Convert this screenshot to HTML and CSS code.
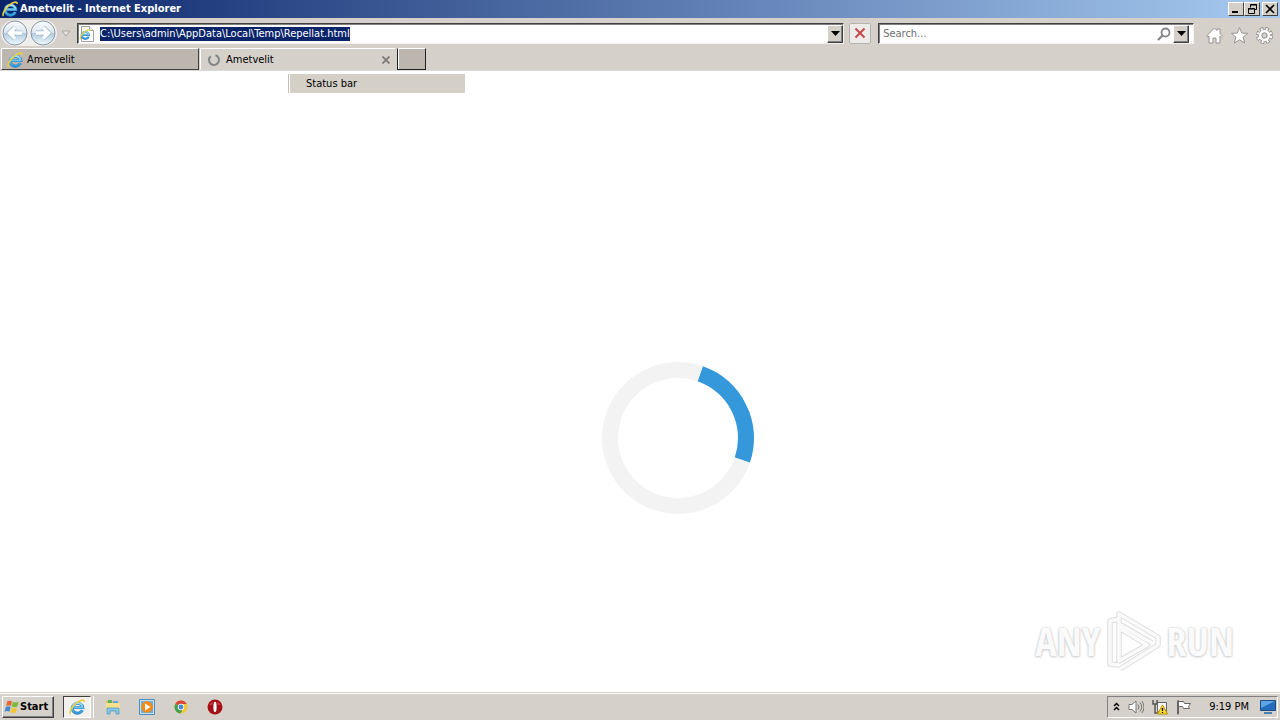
FILE: index.html
```html
<!DOCTYPE html>
<html lang="en">
<head>
<meta charset="utf-8">
<title>Ametvelit - Internet Explorer</title>
<link rel="stylesheet" href="styles.css">
</head>
<body>
<svg class="defs" aria-hidden="true">
  <defs>
    <linearGradient id="blue" x2="0" y2="1"><stop stop-color="#a5e4fb"/><stop offset="1" stop-color="#2b98dd"/></linearGradient>
    <linearGradient id="orb" x2="0" y2="1"><stop stop-color="#fbfcfd"/><stop offset=".48" stop-color="#dde6f0"/><stop offset=".52" stop-color="#b3cbe0"/><stop offset="1" stop-color="#effbff"/></linearGradient>
    <symbol id="ie" viewBox="0 0 16 16">
      <path d="M13.400 11.200A5.300 5 0 1 1 13.800 8.600H4.600" fill="none" stroke="#2d80bd" stroke-width="3"/>
      <path d="M13.200 11.200A5.300 5 0 1 1 13.700 8.600H4.600" fill="none" stroke="url(#blue)" stroke-width="2"/>
      <path d="M1.400 15C-.3 12.800 3.700 6.500 8.500 3.200 12 .8 15.200.1 15.100 3" fill="none" stroke="#e8cf3c" stroke-width="1.600"/>
    </symbol>
  </defs>
</svg>

<header class="titlebar">
  <svg class="title-icon"><use href="#ie"/></svg>
  <h1 class="title">Ametvelit - Internet Explorer</h1>
  <div class="window-buttons">
    <button class="win-btn" aria-label="Minimize"><svg viewBox="0 0 12 10"><path d="M2 8h6" stroke="#000" stroke-width="2"/></svg></button>
    <button class="win-btn" aria-label="Restore"><svg viewBox="0 0 12 10"><path d="M4.500 3.500v-3h6v5h-2M4 1h7M2.500 4.500h6v5h-6zM2 5h7" fill="none" stroke="#000"/></svg></button>
    <button class="win-btn win-close" aria-label="Close"><svg viewBox="0 0 12 10"><path d="M2 1l8 8M10 1l-8 8" stroke="#000" stroke-width="1.700"/></svg></button>
  </div>
</header>

<nav class="toolbar">
  <div class="history">
    <button class="orb" aria-label="Back"><svg viewBox="0 0 26 26"><circle cx="13" cy="13" r="12" fill="url(#orb)" stroke="#8797a8"/><path d="M20 13H8M13 7.500L7.500 13l5.500 5.500" fill="none" stroke="#9fb8ce" stroke-width="5"/><path d="M20 13H8M13 7.500L7.500 13l5.500 5.500" fill="none" stroke="#fff" stroke-width="3.500"/></svg></button>
    <button class="orb" aria-label="Forward"><svg viewBox="0 0 26 26"><circle cx="13" cy="13" r="12" fill="url(#orb)" stroke="#8797a8"/><path d="M6 13h12M13 7.500l5.500 5.500-5.500 5.500" fill="none" stroke="#9fb8ce" stroke-width="5"/><path d="M6 13h12M13 7.500l5.500 5.500-5.500 5.500" fill="none" stroke="#fff" stroke-width="3.500"/></svg></button>
  </div>
  <button class="recent" aria-label="Recent pages"><svg viewBox="0 0 10 7"><path d="M1 1h8L5 6z" fill="#e6e2dd" stroke="#aaa69f"/></svg></button>
  <label class="field address">
    <svg class="page-icon" viewBox="0 0 16 16"><path d="M2.500.5h8l4 4v11h-12z" fill="#fff" stroke="#a3a3a3"/><path d="M10.500.5v4h4" fill="#eee" stroke="#a3a3a3"/><use href="#ie" x="0" y="3" width="12" height="11"/></svg>
    <span class="selected">C:\Users\admin\AppData\Local\Temp\Repellat.html</span>
    <button class="drop" aria-label="Show addresses"><svg viewBox="0 0 9 5"><path d="M0 0h9L4.500 5z"/></svg></button>
  </label>
  <button class="stop" aria-label="Stop"><svg viewBox="0 0 12 12"><path d="M1.500 1.500l9 9M10.500 1.500l-9 9" stroke="#c34a4a" stroke-width="2"/></svg></button>
  <div class="field search">
    <input class="search-input" type="text" placeholder="Search..." aria-label="Search">
    <svg class="magnifier" viewBox="0 0 14 14"><circle cx="8.500" cy="5.500" r="4" fill="none" stroke="#85858a" stroke-width="1.800"/><path d="M5.500 8.500L1 13" stroke="#85858a" stroke-width="2.300"/></svg>
    <button class="drop" aria-label="Search options"><svg viewBox="0 0 9 5"><path d="M0 0h9L4.500 5z"/></svg></button>
  </div>
  <div class="commands">
    <button class="command" aria-label="Home"><svg viewBox="0 0 17 17"><path d="M1 8.500l7.500-7.500L11 3.500V2h3v4.500l2.500 2.500-1.200 1.200-1.300-1V16h-4v-5H7v5H3V9.200l-1.300 1z" fill="#fff" stroke="#8e8b87" stroke-width=".9"/></svg></button>
    <button class="command" aria-label="Favorites"><svg viewBox="0 0 17 17"><path d="M8.500.7l2.200 5.300 5.800.4-4.400 3.700 1.500 5.900-5.100-3.200L3.400 16l1.500-5.900L.5 6.400 6.300 6z" fill="#fff" stroke="#8e8b87" stroke-width=".9"/></svg></button>
    <button class="command" aria-label="Tools"><svg viewBox="0 0 17 17"><circle cx="8.500" cy="8.500" r="6.500" fill="none" stroke="#8e8b87" stroke-width="4" stroke-dasharray="3.300 1.805"/><circle cx="8.500" cy="8.500" r="6" fill="#fff" stroke="#8e8b87" stroke-width=".8"/><circle cx="8.500" cy="8.500" r="6.500" fill="none" stroke="#fff" stroke-width="2.600" stroke-dasharray="1.900 3.205" stroke-dashoffset="-.7"/><circle cx="8.500" cy="8.500" r="2.700" fill="#d5d0c9" stroke="#8e8b87"/></svg></button>
  </div>
</nav>

<div class="tabs">
  <button class="tab tab-back"><svg class="tab-icon"><use href="#ie"/></svg><span>Ametvelit</span></button>
  <div class="tab tab-front">
    <svg class="tab-icon" viewBox="0 0 16 16"><path d="M9.500 3.200a5 5 0 1 1-4.800 1" fill="none" stroke="#858585" stroke-width="2"/></svg>
    <span class="tab-label">Ametvelit</span>
    <button class="tab-close" aria-label="Close tab"><svg viewBox="0 0 8 8"><path d="M.5.5l7 7M7.500.5l-7 7" stroke="#7c7975" stroke-width="1.800"/></svg></button>
  </div>
  <button class="new-tab" aria-label="New tab"></button>
</div>

<main class="page">
  <div class="menu-remnant">Status bar</div>
  <div class="loader" role="progressbar" aria-label="Loading"></div>
  <div class="watermark">
    <span>ANY</span>
    <svg class="play" viewBox="0 0 58 62">
      <g fill="none" stroke-linejoin="round">
        <path d="M15 9L6 11v43l9 1M15 47V4l39 23v8L16 59M15 18l28 17-28 16zM15 14l33 19" stroke="#dedede" stroke-width="5.500"/>
        <path d="M15 9L6 11v43l9 1M15 47V4l39 23v8L16 59M15 18l28 17-28 16zM15 14l33 19" stroke="#fafafa" stroke-width="3.500"/>
      </g>
    </svg>
    <span>RUN</span>
  </div>
</main>

<footer class="taskbar">
  <button class="start"><svg viewBox="0 0 17 16"><path d="M3.500 2q2.500-1.500 5 0L7.300 7q-2.300-1.500-5 0z" fill="#e9632f"/><path d="M9.500 2.400q3 1.500 6 0l-1.300 5q-3 1.500-6 0z" fill="#7cb83c"/><path d="M2 8q2.700-1.500 5 0l-1.300 5q-2.300-1.500-5 0z" fill="#3f88d0"/><path d="M8 8.500q3 1.500 6 0l-1.300 5q-3 1.500-6 0z" fill="#f5c534"/></svg>Start</button>
  <div class="apps">
    <button class="app app-active" aria-label="Internet Explorer"><svg><use href="#ie"/></svg></button>
    <button class="app" aria-label="File Explorer"><svg viewBox="0 0 16 16"><path d="M1 2h6l1 1h6v9H1z" fill="#e3bd55"/><path d="M3 1h4v3H3z" fill="#58b35c"/><path d="M8 2h5v3H8z" fill="#65a4d4"/><path d="M1 4h14v8H1z" fill="#f7df8d"/><path d="M2 15V9h12v6h-3v-3H5v3z" fill="#86c6e8" stroke="#4796c3" stroke-width=".7"/></svg></button>
    <button class="app" aria-label="Media Player"><svg viewBox="0 0 16 16"><path d="M.5.5h15v15H.5z" fill="#c5e1f4" stroke="#4d8dbd"/><path d="M2 2h12v12H2z" fill="#6eaed8"/><circle cx="8" cy="8" r="5.800" fill="#f28a18"/><path d="M6 4.500L11.500 8 6 11.500z" fill="#fff"/></svg></button>
    <button class="app" aria-label="Chrome"><svg viewBox="0 0 16 16"><circle cx="8" cy="8" r="6.500" fill="#f3c72d"/><path d="M8 8L2.400 4.700A6.500 6.500 0 0 1 13.700 5H8z" fill="#d84535"/><path d="M8 8L2.400 4.700A6.500 6.500 0 0 0 7.500 14.500L10 10z" fill="#43a052"/><circle cx="8" cy="8" r="3.200" fill="#fff"/><circle cx="8" cy="8" r="2.400" fill="#4787d6"/></svg></button>
    <button class="app" aria-label="Opera"><svg viewBox="0 0 16 16"><circle cx="8" cy="8" r="7.500" fill="#a70e16"/><path d="M2 6a6.500 5 0 0 1 12 0" fill="#c83a3e"/><ellipse cx="8" cy="8" rx="2.800" ry="6" fill="#8d1c22"/><ellipse cx="8" cy="8" rx="1.600" ry="5.200" fill="#fff"/></svg></button>
  </div>
  <div class="tray">
    <button class="tray-btn tray-more" aria-label="Show hidden icons"><svg viewBox="0 0 7 9"><path d="M1 4l2.500-2.500L6 4M1 8l2.500-2.500L6 8" fill="none" stroke="#000" stroke-width="1.500"/></svg></button>
    <button class="tray-btn" aria-label="Volume"><svg viewBox="0 0 16 16"><path d="M1 5.500h3L8 2v12l-4-3.500H1z" fill="#fff" stroke="#777"/><path d="M10 5.500q2 2.500 0 5M12 3.500q3.500 4.500 0 9M14 2q4 6 0 12" fill="none" stroke="#777"/></svg></button>
    <button class="tray-btn" aria-label="Network"><svg viewBox="0 0 16 16"><path d="M5.500 3.500h9v9h-9z" fill="#f4f4f4" stroke="#666"/><path d="M1 1v4h4V1M3 5v9h4" fill="none" stroke="#555" stroke-width="1.500"/><path d="M10.500 6l5 9h-10z" fill="#ffdc2c" stroke="#bc9000"/><path d="M10.500 9v3M10.500 13v1" stroke="#000" stroke-width="1.300"/></svg></button>
    <button class="tray-btn" aria-label="Action Center"><svg viewBox="0 0 16 16"><path d="M1.500 15V1.500h1V15zM2.500 2.500h5l1 2h6l-2 3 1 2h-6l-1-2h-4z" fill="#fff" stroke="#666"/></svg></button>
    <time class="clock">9:19 PM</time>
    <button class="tray-btn tray-desktop" aria-label="Show desktop"><svg viewBox="0 0 16 14"><path d="M.5.5h15v10H.5z" fill="#236dbd" stroke="#184d88"/><path d="M1 1h14L1 8z" fill="#5da5e5"/><path d="M4 13h8" stroke="#477fae" stroke-width="2"/></svg></button>
  </div>
</footer>
</body>
</html>
```

FILE: styles.css
```css
* { box-sizing: border-box; }

body {
  margin: 0;
  min-height: 100vh;
  display: flex;
  flex-direction: column;
  background: #fff;
  color: #000;
  font: 11px/14px "DejaVu Sans Condensed", "DejaVu Sans", sans-serif;
}

button {
  margin: 0;
  padding: 0;
  border: 0;
  background: none;
  color: inherit;
  font: inherit;
}

svg { display: block; }
.defs { position: absolute; width: 0; height: 0; }

.titlebar {
  display: flex;
  align-items: center;
  height: 18px;
  padding: 0 2px;
  background: linear-gradient(90deg, #0a246a, #a6caf0);
}
.title-icon { width: 16px; height: 16px; margin-right: 2px; }
.title { flex: 1; margin: 0; color: #fff; font-size: 11px; font-weight: bold; }
.window-buttons { display: flex; }
.win-btn {
  display: grid;
  place-items: center;
  width: 16px;
  height: 14px;
  background: #d4d0c8;
  border: 1px solid;
  border-color: #fff #404040 #404040 #fff;
}
.win-btn svg { width: 12px; height: 10px; }
.win-close { margin-left: 2px; }

.toolbar {
  display: flex;
  align-items: center;
  height: 30px;
  padding: 0 7px 0 1px;
  background: #d5d0c9;
}
.history {
  display: flex;
  gap: 2px;
  padding: 0 1px;
  border-radius: 13px;
  background: #f0eeeb;
}
.orb svg { width: 26px; height: 26px; }
.recent { margin: 0 6px 0 4px; }
.recent svg { width: 10px; height: 7px; }
.field {
  display: flex;
  align-items: center;
  height: 21px;
  min-width: 0;
  background: #fff;
  border: 1px solid;
  border-color: #404040 #f4f2ee #f4f2ee #404040;
  box-shadow: inset 1px 1px #808080;
}
.address { flex: 762 1 0; padding: 2px 0 1px 1px; }
.page-icon { width: 16px; height: 16px; margin-right: 5px; }
.selected { background: #0a246a; color: #fff; white-space: nowrap; }
.drop {
  display: grid;
  place-items: center;
  width: 16px;
  height: 18px;
  margin-left: auto;
  background: #d4d0c8;
  border: 1px solid;
  border-color: #fff #404040 #404040 #fff;
  box-shadow: inset -1px -1px #808080;
}
.drop svg { width: 9px; height: 5px; }
.stop {
  display: grid;
  place-items: center;
  width: 22px;
  height: 21px;
  margin: 0 7px 0 5px;
  background: #eeecea;
  border: 1px solid #b7b3ad;
  border-radius: 2px;
}
.stop svg { width: 12px; height: 12px; }
.search { flex: 305 1 0; padding: 1px 4px 0 4px; }
.search-input {
  flex: 1;
  min-width: 0;
  padding: 0;
  border: 0;
  outline: 0;
  background: none;
  font: inherit;
}
.search-input::placeholder { color: #6d6d6d; opacity: 1; }
.magnifier { width: 14px; height: 14px; margin-right: 2px; }
.commands { display: flex; gap: 8px; margin: 4px 0 0 12px; }
.command svg { width: 17px; height: 17px; }

.tabs {
  display: flex;
  height: 23px;
  padding-left: 1px;
  background: #d5d0c9;
  border-bottom: 1px solid #dedad5;
}
.tab { display: flex; align-items: center; height: 22px; padding-top: 2px; }
.tab-icon { width: 16px; height: 16px; }
.tab-back {
  width: 198px;
  padding-left: 5px;
  gap: 4px;
  background: #bcb6ae;
  border: 1px solid;
  border-color: #fff #404040 #404040 #fff;
}
.tab-front {
  width: 196px;
  margin-left: 1px;
  padding-left: 5px;
  padding-right: 5px;
  gap: 4px;
  border: 1px solid;
  border-color: #fff transparent transparent #fff;
}
.tab-label { flex: 1; }
.tab-close svg { width: 8px; height: 8px; }
.new-tab {
  width: 29px;
  height: 22px;
  margin-left: 1px;
  background: #bcb6ae;
  border: 1px solid #202020;
  border-top-color: #fff;
  box-shadow: inset 1px 0 #fff;
}

.page {
  position: relative;
  flex: 1;
  display: flex;
  flex-direction: column;
  justify-content: space-between;
  padding-top: 291px;
}
.menu-remnant {
  position: absolute;
  top: 3px;
  left: 288px;
  width: 177px;
  height: 19px;
  padding: 3px 0 2px 17px;
  background: #d4d0c8;
  border-left: 1px solid #c2beb6;
  box-shadow: inset 1px 0 #fff;
}
.loader {
  width: 152px;
  height: 152px;
  margin-left: 47%;
  border: 16px solid #f3f3f3;
  border-top-color: #3498db;
  border-radius: 50%;
  transform: rotate(64deg);
}
.watermark {
  display: flex;
  align-items: center;
  align-self: flex-end;
  gap: 4px;
  margin: 0 46px 20px 0;
  color: #fafafa;
  font: 40px/62px "Liberation Sans Narrow", "Open Sans Condensed", "Liberation Sans", sans-serif;
  text-shadow: 0 0 2px #c4c4c4, 0 1px 3px #cfcfcf;
}
.play { width: 58px; height: 62px; }

.taskbar {
  display: flex;
  align-items: center;
  height: 28px;
  padding: 0 2px;
  background: #d5d0c9;
  border-top: 1px solid #d5d0c9;
  box-shadow: inset 0 1px #fff;
}
.start {
  display: flex;
  align-items: center;
  width: 52px;
  height: 22px;
  padding-left: 1px;
  font-weight: bold;
  border: 1px solid;
  border-color: #fff #404040 #404040 #fff;
  box-shadow: inset -1px -1px #808080;
}
.start svg { width: 16px; height: 16px; }
.apps { display: flex; gap: 6px; margin-left: 9px; }
.app { display: grid; place-items: center; width: 28px; height: 22px; }
.app svg { width: 16px; height: 16px; }
.app-active {
  margin-right: 2px;
  background: #f3f1ee;
  border: 1px solid;
  border-color: #404040 #fff #fff #404040;
  box-shadow: 2px 0 #d5d0c9, 3px 0 #fff;
}
.tray {
  display: flex;
  align-items: center;
  gap: 8px;
  height: 22px;
  margin-left: auto;
  padding: 0 1px 0 5px;
  border: 1px solid;
  border-color: #808080 #fff #fff #808080;
}
.tray-btn svg { width: 16px; height: 16px; }
.tray-more svg { width: 7px; height: 9px; }
.clock { margin: 0 3px 0 9px; }
```
